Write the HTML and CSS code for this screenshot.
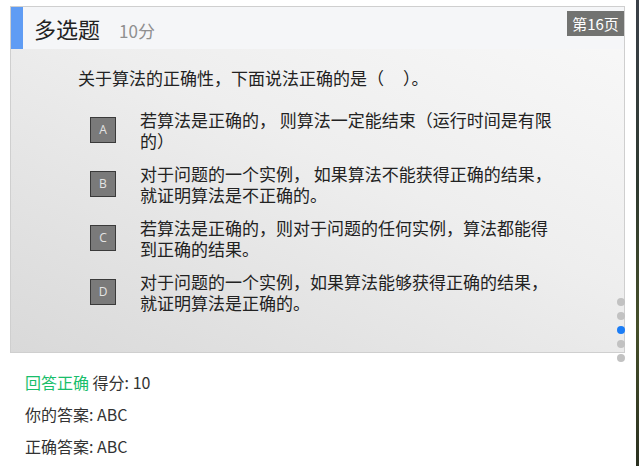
FILE: index.html
```html
<!DOCTYPE html>
<html lang="zh">
<head>
<meta charset="utf-8">
<title>多选题</title>
<link rel="stylesheet" href="styles.css">
</head>
<body>
<div class="page">
  <div class="slide">
    <div class="slide-header">
      <span class="title">多选题</span>
      <span class="score">10分</span>
    </div>
    <div class="badge">第16页</div>
    <p class="question">关于算法的正确性，下面说法正确的是（&nbsp;&nbsp;&nbsp;&nbsp;&nbsp;）。</p>
    <ul class="options">
      <li class="option"><span class="key">A</span><span class="text"><span class="line">若算法是正确的， 则算法一定能结束（运行时间是有限</span><span class="line">的）</span></span></li>
      <li class="option"><span class="key">B</span><span class="text"><span class="line">对于问题的一个实例， 如果算法不能获得正确的结果，</span><span class="line">就证明算法是不正确的。</span></span></li>
      <li class="option"><span class="key">C</span><span class="text"><span class="line">若算法是正确的，则对于问题的任何实例，算法都能得</span><span class="line">到正确的结果。</span></span></li>
      <li class="option"><span class="key">D</span><span class="text"><span class="line">对于问题的一个实例，如果算法能够获得正确的结果，</span><span class="line">就证明算法是正确的。</span></span></li>
    </ul>
    <div class="dots">
      <span class="dot"></span>
      <span class="dot"></span>
      <span class="dot active"></span>
      <span class="dot"></span>
      <span class="dot"></span>
    </div>
  </div>
  <div class="result">
    <p><span class="ok">回答正确</span> 得分: 10</p>
    <p>你的答案: ABC</p>
    <p>正确答案: ABC</p>
  </div>
</div>
<div class="next-slide"></div>
</body>
</html>
```
FILE: styles.css
```css
html, body {
  margin: 0;
  padding: 0;
  background: #fff;
}
body {
  font-family: "Microsoft YaHei", "Noto Sans CJK SC", "Noto Sans", sans-serif;
  color: #333;
}
.page {
  padding: 6px 0 0 10px;
}
.slide {
  position: relative;
  width: 613px;
  height: 345px;
  border: 1px solid #cfcfcf;
  background: linear-gradient(205deg, #f9f9f9 0%, #eeeeee 45%, #d9d9d9 100%);
}
.slide-header {
  display: flex;
  align-items: center;
  height: 42px;
  background: #f5f6f8;
  border-left: 12px solid #5f9cf4;
  padding-left: 11px;
}
.title {
  font-size: 22px;
  color: #222;
  line-height: 1;
}
.score {
  margin-left: 19px;
  font-size: 17px;
  color: #8f8f8f;
  margin-top: 4px;
}
.badge {
  position: absolute;
  top: 4px;
  right: 0;
  width: 57px;
  height: 25px;
  line-height: 25px;
  text-align: center;
  background: #727371;
  color: #fff;
  font-size: 15px;
}
.question {
  margin: 18px 0 0 67px;
  font-size: 17px;
  line-height: 21px;
  color: #222;
}
.options {
  list-style: none;
  margin: 21px 0 0 79px;
  padding: 0;
  display: flex;
  flex-direction: column;
  gap: 12px;
}
.option {
  display: flex;
  align-items: center;
  gap: 24px;
}
.key {
  flex: none;
  width: 24px;
  height: 24px;
  border: 1px solid #3a3a3a;
  background: #7a7a7a;
  color: #e4e4e4;
  font-family: "Open Sans", "Noto Sans", sans-serif;
  font-size: 12px;
  line-height: 24px;
  text-align: center;
}
.text {
  display: flex;
  flex-direction: column;
  font-size: 17px;
  line-height: 21px;
  color: #222;
}
.line {
  display: block;
  height: 21px;
  white-space: nowrap;
}
.dots {
  position: absolute;
  right: -1px;
  top: 291px;
  display: flex;
  flex-direction: column;
  gap: 6px;
}
.dot {
  width: 8px;
  height: 8px;
  border-radius: 50%;
  background: #c2c2c2;
}
.dot.active {
  background: #1b7df6;
}
.result {
  padding: 13px 0 0 15px;
}
.result p {
  margin: 0;
  font-size: 16px;
  line-height: 32px;
  color: #333;
}
.ok {
  color: #19be6b;
}
.next-slide {
  position: fixed;
  top: 0;
  right: 0;
  width: 3px;
  height: 100%;
  background: linear-gradient(180deg, #3a4048 0%, #2f3a30 40%, #46502a 70%, #2a3020 100%);
}
```
